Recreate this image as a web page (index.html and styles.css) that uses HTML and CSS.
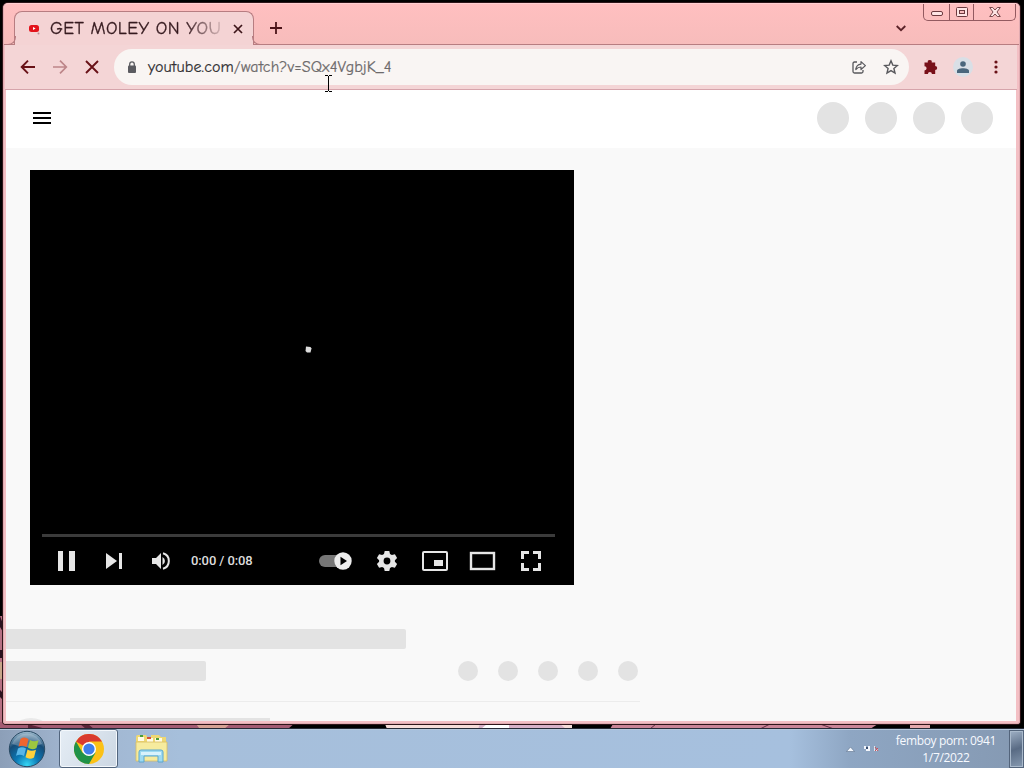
FILE: index.html
```html
<!DOCTYPE html>
<html lang="en">
<head>
    <meta charset="UTF-8">
    <title>GET MOLEY ON YOUTUBE</title>
    <link rel="stylesheet" href="styles.css">
</head>
<body>
    <div class="desktop">
        <svg class="wallpaper" width="1024" height="768">
            <rect width="1024" height="768" fill="#000"/>
            <path d="M0 616h3v112H0z" fill="#b77083"/>
            <path d="M0 616l3 8v8l-3-5zM0 650h3v8H0zM0 690l3 3v7l-3-3z" fill="#2c111f"/>
            <path d="M0 662h3v17H0z" fill="#c8a68a"/>
            <path d="M0 722h296l-8 7H0z" fill="#a35b72"/>
            <path d="M28 724l18 5H28zM80 724h8l6 5h-8z" fill="#5b2438"/>
            <path d="M196 724h34l-6 5h-24z" fill="#d5a294"/>
            <path d="M385 724h187v5H387z" fill="#f6ddd9"/>
            <path d="M480 724h80l6 5h-88z" fill="#d7b2c8"/>
            <path d="M487 724h22v5h-28z" fill="#fff"/>
            <path d="M613 724h265l-8 5H610z" fill="#c98496"/>
            <path d="M650 729l6-5M760 729l10-5M820 724l14 5" stroke="#622d42"/>
            <path d="M910 724h20v5h-20z" fill="#e3a9ad"/>
        </svg>

        <div class="window">
            <div class="tab-bar">
                <div class="tab">
                    <svg class="favicon" width="13" height="12" viewBox="0 0 13 12">
                        <rect x="0" y="2" width="10" height="7" rx="2.5" fill="#e3131b"/>
                        <path d="M4 4v3l2.600-1.500z" fill="#fff"/>
                        <circle cx="9.500" cy="10.500" r="1" fill="#b98d92"/>
                    </svg>
                    <span class="tab-title">GET MOLEY ON YOU</span>
                    <svg width="10" height="10" viewBox="0 0 10 10"><path d="M1 1l8 8M9 1L1 9" stroke="#3c1519" stroke-width="1.7"/></svg>
                </div>
                <svg class="new-tab" width="12" height="12" viewBox="0 0 12 12"><path d="M6 0v12M0 6h12" stroke="#4b1318" stroke-width="1.8"/></svg>
                <svg class="tab-search" width="10" height="7" viewBox="0 0 10 7"><path d="M.7 1L5 5.2 9.3 1" fill="none" stroke="#5a2228" stroke-width="1.8"/></svg>
                <div class="caption-buttons">
                    <span class="minimize"><svg width="12" height="5"><rect x=".5" y=".5" width="11" height="4" rx="1.5" fill="#ffe5e5" stroke="#6c3a3f"/></svg></span>
                    <span class="maximize"><svg width="12" height="10"><rect x=".5" y=".5" width="11" height="9" rx="1" fill="#ffe5e5" stroke="#6c3a3f"/><rect x="3.5" y="3.5" width="5" height="3" fill="#f9bcbc" stroke="#6c3a3f"/></svg></span>
                    <span class="close"><svg width="12" height="10" viewBox="0 0 12 10"><path d="M.7.5h3L6 3 8.300.5h3L8 5l3.300 4.500h-3L6 7 3.700 9.500h-3L4 5z" fill="#ffe5e5" stroke="#6c3a3f" stroke-width=".9"/></svg></span>
                </div>
            </div>

            <div class="toolbar">
                <svg width="16" height="16" viewBox="0 0 16 16"><path d="M15 8H2M8 1.700L1.700 8 8 14.300" fill="none" stroke="#681117" stroke-width="1.9"/></svg>
                <svg width="16" height="16" viewBox="0 0 16 16"><path d="M1 8h13M8 1.700L14.300 8 8 14.300" fill="none" stroke="#bd8589" stroke-width="1.7"/></svg>
                <svg width="16" height="16" viewBox="0 0 16 16"><path d="M2 2l12 12M14 2L2 14" stroke="#681117" stroke-width="1.9"/></svg>
                <div class="address">
                    <svg width="10" height="13" viewBox="0 0 10 13"><rect x="1" y="4.500" width="8" height="7.500" rx="1" fill="#5b5b60"/><path d="M2.700 5V3.200a2.300 2.300 0 0 1 4.600 0V5" fill="none" stroke="#5b5b60" stroke-width="1.300"/></svg>
                    <span class="url"><b>youtube.com</b>/watch?v=SQx4VgbjK_4</span>
                    <svg class="share" width="16" height="16" viewBox="0 0 16 16"><path d="M6 3H3.500Q2 3 2 4.500v8Q2 14 3.500 14h7q1.500 0 1.500-1.500V11" fill="none" stroke="#58585c" stroke-width="1.300"/><path d="M4.800 10.500C5.200 7 7 5.300 10 5.100V2.600l4.400 4L10 10.500V8Q7 8 4.800 10.500z" fill="none" stroke="#58585c" stroke-width="1.200" stroke-linejoin="round"/></svg>
                    <svg width="16" height="16" viewBox="0 0 16 16"><path d="M8 1.800l1.800 4.300 4.600.4-3.500 3 1.100 4.600-4-2.500-4 2.500 1.100-4.600-3.500-3 4.600-.4z" fill="none" stroke="#58585c" stroke-width="1.400"/></svg>
                </div>
                <svg class="extensions" width="16" height="16" viewBox="0 0 16 16"><path d="M1.500 3.500h3.300a2 2 0 1 1 3.900 0h3.500V7a2 2 0 1 1 0 4v4H8.900a2 2 0 0 0-4 0H1.500v-3.600a2.100 2.100 0 0 0 0-4.200z" fill="#781019"/></svg>
                <span class="profile"><svg width="12" height="12" viewBox="0 0 12 12"><circle cx="6" cy="3" r="2.800" fill="#4a667c"/><path d="M0 12v-2C0 8 3 7.200 6 7.200s6 .8 6 2.800v2z" fill="#4a667c"/></svg></span>
                <svg width="4" height="14" viewBox="0 0 4 14"><g fill="#681117"><circle cx="2" cy="2" r="1.600"/><circle cx="2" cy="7" r="1.600"/><circle cx="2" cy="12" r="1.600"/></g></svg>
            </div>

            <div class="page">
                <div class="masthead">
                    <svg width="18" height="12"><path d="M0 1h18M0 6h18M0 11h18" stroke="#000" stroke-width="2"/></svg>
                    <div class="masthead-icons">
                        <i></i><i></i><i></i><i></i>
                    </div>
                </div>

                <div class="player">
                    <div class="video">
                        <svg width="7" height="7" viewBox="0 0 7 7"><path d="M1 .500L5.500 1l1 1.500L5.500 6.500H2L.5 5z" fill="#ddd"/></svg>
                    </div>
                    <div class="progress"></div>
                    <div class="controls">
                        <svg width="48" height="48" viewBox="0 0 48 48"><path d="M16 14h5v20h-5zM27 14h6v20h-6z" fill="#e6e6e6"/></svg>
                        <svg width="46" height="48" viewBox="0 0 46 48"><path d="M16 16v16l11-8zM29 16h3v16h-3z" fill="#e6e6e6"/></svg>
                        <svg width="48" height="48" viewBox="0 0 48 48"><path d="M16 21v6h4l5 5V16l-5 5zM26.500 20v8a4.500 4.500 0 0 0 0-8z" fill="#e6e6e6"/><path d="M27 16.300a8 8 0 0 1 0 15.400" fill="none" stroke="#e6e6e6" stroke-width="2"/></svg>
                        <span class="time">0:00 / 0:08</span>
                        <svg width="48" height="48" viewBox="0 0 48 48"><rect x="4" y="18" width="28" height="12" rx="6" fill="#777"/><circle cx="28" cy="24" r="8.700" fill="#ededed"/><path d="M25.500 19.800v8.400l6.500-4.200z" fill="#000"/></svg>
                        <svg width="48" height="48" viewBox="0 0 48 48"><path d="M21.700 14h4.600l.7 3 1.900 1.100 3-.9 2.200 3.900-2.200 2.100v1.600l2.200 2.100-2.200 3.900-3-.9L27 31l-.7 3h-4.600l-.7-3-1.900-1.100-3 .9-2.200-3.900 2.200-2.100v-1.600l-2.200-2.100 2.200-3.900 3 .9L21 17zM24 20.600a3.400 3.400 0 1 0 0 6.800 3.400 3.400 0 0 0 0-6.800z" fill="#e6e6e6" fill-rule="evenodd"/></svg>
                        <svg width="48" height="48" viewBox="0 0 48 48"><rect x="12" y="15" width="24" height="18" rx="1" fill="none" stroke="#e6e6e6" stroke-width="2"/><path d="M23 23h9v6h-9z" fill="#e6e6e6"/></svg>
                        <svg width="48" height="48" viewBox="0 0 48 48"><rect x="12" y="16" width="23" height="16" fill="none" stroke="#e6e6e6" stroke-width="2.400"/></svg>
                        <svg width="48" height="48" viewBox="0 0 48 48"><path d="M15.500 22v-6.500H22M26 15.500h6.500V22M32.500 26v6.500H26M22 32.500h-6.500V26" fill="none" stroke="#e6e6e6" stroke-width="3"/></svg>
                    </div>
                </div>

                <div class="skeleton">
                    <div class="line-title"></div>
                    <div class="meta-row">
                        <div class="line-views"></div>
                        <div class="actions"><i></i><i></i><i></i><i></i><i></i></div>
                    </div>
                    <div class="owner">
                        <div class="avatar"></div>
                        <div class="line-owner"></div>
                    </div>
                </div>
            </div>
        </div>

        <div class="taskbar">
            <svg width="38" height="38" viewBox="0 0 38 38">
                <defs>
                    <radialGradient id="orb" cx=".5" cy=".95" r=".95">
                        <stop offset="0" stop-color="#35d6f4"/>
                        <stop offset=".35" stop-color="#0b78b5"/>
                        <stop offset=".7" stop-color="#164c77"/>
                        <stop offset="1" stop-color="#a4c0d2"/>
                    </radialGradient>
                </defs>
                <circle cx="19" cy="19" r="17.700" fill="url(#orb)" stroke="#294a63"/>
                <path d="M4 14a16 16 0 0 1 30 0q-14 6-30 0z" fill="#fff" opacity=".25"/>
                <path d="M12.500 9q4-3 8 .2L18.500 17q-4-2.500-8-.3z" fill="#ee6530"/>
                <path d="M22 10q4 2.500 8.500.2L28.500 18q-4 2.500-8.500-.2z" fill="#9dc83f"/>
                <path d="M10 18.500q4-2.500 8 0L16 26q-4-2.500-8-.2z" fill="#58b6e8"/>
                <path d="M19.500 19.500q4 2.500 8.500.2L26 27.500q-4 2.500-8.500-.2z" fill="#ffd13c"/>
            </svg>
            <div class="task-active">
                <svg width="30" height="30" viewBox="0 0 30 30">
                    <circle cx="15" cy="15" r="15" fill="#fbc116"/>
                    <path d="M15 15L2 7.500A15 15 0 0 1 28 7.500H15z" fill="#d93a2f"/>
                    <path d="M2 7.500A15 15 0 0 0 15 30l6.500-11.200L15 15l-6.500 3.700z" fill="#1f9249"/>
                    <circle cx="15" cy="15" r="7" fill="#fff"/>
                    <circle cx="15" cy="15" r="5.600" fill="#3f7eea"/>
                </svg>
            </div>
            <svg class="explorer" width="34" height="30" viewBox="0 0 34 30">
                <path d="M1 3q0-2 2-2h8l2 3h3V1h8l2 2h5v24H1z" fill="#eed873"/>
                <path d="M3 3h6v4H3zM12 4h6v4h-6zM20 4h7v4h-7z" fill="#fffbe5"/>
                <path d="M5 1h3v2H5zM21 4h3v2h-3z" fill="#4a9d3c"/>
                <path d="M12 3h4v2h-4z" fill="#d65036"/>
                <path d="M1 8h31v19H1z" fill="#f6eb9e" stroke="#d9bd62" stroke-width=".8"/>
                <path d="M4 28V18q0-2 2-2h20q2 0 2 2v10h-5v-6H9v6z" fill="#9edaf1" stroke="#5aa6cf"/>
                <path d="M6 18h20v3H6z" fill="#d8f2fc"/>
            </svg>
            <div class="tray">
                <svg width="9" height="6"><path d="M.5 5.500l4-4.500 4 4.500z" fill="#f5f9ff" stroke="#5d708c" stroke-width=".6"/></svg>
                <svg class="status" width="16" height="8" viewBox="0 0 16 8"><path d="M1 1h2v3H1zM5 1h2v5H3V4h2z" fill="#f3f6fc"/><path d="M3 2h2v2H3z" fill="#384e70"/><path d="M11 1h1v5h-1zM13 4h2v2h-2z" fill="#e5e9f0"/><path d="M12 2l3 4M15 3l-3 3" stroke="#c4505c"/></svg>
                <div class="clock">
                    <div>femboy porn: 0941</div>
                    <div>1/7/2022</div>
                </div>
            </div>
            <div class="show-desktop"></div>
        </div>

        <svg class="cursor" width="7" height="17" viewBox="0 0 7 17"><path d="M0 .5h3M4 .5h3M3.500 1v15M0 16.500h3M4 16.500h3" stroke="#000"/></svg>
    </div>
</body>
</html>
```

FILE: styles.css
```css
* {
    box-sizing: border-box;
}
body {
    margin: 0;
    font-family: "Open Sans", sans-serif;
}
svg {
    display: block;
    flex: none;
}
.desktop {
    position: relative;
    display: flex;
    flex-direction: column;
    width: 1024px;
    height: 768px;
    overflow: hidden;
    background: #000;
}
.wallpaper {
    position: absolute;
    inset: 0;
}
.window {
    position: relative;
    display: flex;
    flex-direction: column;
    width: 1017px;
    height: 721px;
    margin: 3px 0 5px 3px;
    padding: 0 4px 3px 3px;
    background: #f3bfc4;
    border-radius: 5px 5px 3px 3px;
    box-shadow: inset 0 0 0 1px #e0abb1, 0 0 0 1px #2e1519;
}

/* tab strip */
.tab-bar {
    display: flex;
    height: 42px;
    margin: 0 -3px 0 -2px;
    padding-left: 10px;
    border-radius: 5px 5px 0 0;
    background: linear-gradient(#ffbfc0, #f7bcbb);
    border-top: 1px solid #ffd0d2;
    border-bottom: 1px solid #b77d81;
}
.tab {
    position: relative;
    display: flex;
    align-items: center;
    width: 240px;
    height: 34px;
    margin-top: 7px;
    padding: 0 10px 0 14px;
    background: #f4d3d4;
    border: 1px solid #b77d81;
    border-bottom: none;
    border-radius: 8px 8px 0 0;
}
.tab::before,
.tab::after {
    content: "";
    position: absolute;
    bottom: 0;
    width: 8px;
    height: 8px;
    border-bottom: 1px solid #b77d81;
}
.tab::before {
    left: -8px;
    border-right: 1px solid #b77d81;
    border-bottom-right-radius: 8px;
}
.tab::after {
    right: -8px;
    border-left: 1px solid #b77d81;
    border-bottom-left-radius: 8px;
}
.favicon {
    margin-right: 8px;
}
.tab-title {
    width: 173px;
    margin-right: 10px;
    overflow: hidden;
    font: 18px "Comic Sans MS", "Comic Neue", "Noto Sans", sans-serif;
    letter-spacing: .35px;
    -webkit-text-stroke: .3px transparent;
    white-space: nowrap;
    color: transparent;
    background: linear-gradient(90deg, #35191e 78%, #35191e22 100%);
    background-clip: text;
    -webkit-background-clip: text;
}
.new-tab {
    margin: 18px 0 0 16px;
}
.tab-search {
    margin: 21px 17px 0 auto;
}
.caption-buttons {
    display: flex;
    width: 93px;
    height: 17px;
    margin-right: 3px;
    border: 1px solid #935a60;
    border-top: none;
    border-radius: 0 0 5px 5px;
}
.caption-buttons span {
    display: flex;
    align-items: center;
    justify-content: center;
}
.minimize {
    width: 25px;
    padding-top: 3px;
}
.maximize {
    width: 25px;
    border-left: 1px solid #935a60;
    border-right: 1px solid #935a60;
}
.close {
    flex: 1;
}

/* toolbar */
.toolbar {
    display: flex;
    align-items: center;
    gap: 16px;
    height: 45px;
    margin: 0 -1px 0 -1px;
    padding: 0 17px 0 15px;
    background: #f4d5d6;
    border-bottom: 1px solid #d6a4ab;
}
.address {
    display: flex;
    align-items: center;
    flex: none;
    width: 795px;
    height: 36px;
    margin-left: -2px;
    padding: 0 10px 0 13px;
    border-radius: 18px;
    background: #f9f5f3;
}
.url {
    margin-left: 11px;
    font: 16px "Comic Sans MS", "Comic Neue", "Noto Sans", sans-serif;
    letter-spacing: .1px;
    -webkit-text-stroke: .2px;
    color: #6d6a6b;
}
.url b {
    font-weight: normal;
    color: #323033;
}
.share {
    margin: 0 16px 0 auto;
}
.extensions {
    margin-left: -2px;
}
.profile {
    display: flex;
    align-items: center;
    justify-content: center;
    width: 20px;
    height: 20px;
    margin: 0 5px 0 -2px;
    border-radius: 50%;
    background: #d9dfe6;
}

/* page */
.page {
    flex: 1;
    min-height: 0;
    overflow: hidden;
    background: #f9f9f9;
}
.masthead {
    display: flex;
    align-items: center;
    justify-content: space-between;
    height: 58px;
    padding: 0 23px 2px 27px;
    background: #fff;
}
.masthead-icons {
    display: flex;
    gap: 16px;
}
.masthead-icons i {
    width: 32px;
    height: 32px;
    border-radius: 50%;
    background: #e3e3e3;
}
.player {
    display: flex;
    flex-direction: column;
    width: 544px;
    height: 415px;
    margin: 22px 0 0 24px;
    background: #000;
}
.video {
    display: flex;
    height: 364px;
    padding: 176px 0 0 275px;
}
.progress {
    width: 513px;
    height: 3px;
    margin-left: 12px;
    background: #3b3b3b;
}
.controls {
    display: flex;
    padding-left: 12px;
}
.time {
    width: 131px;
    padding-left: 7px;
    font: 500 13px/47px Roboto, sans-serif;
    letter-spacing: -.1px;
    color: #ddd;
}

/* loading placeholders */
.skeleton {
    width: 634px;
    margin-top: 44px;
}
.line-title {
    width: 400px;
    height: 20px;
    border-radius: 0 2px 2px 0;
    background: #e3e3e3;
}
.meta-row {
    display: flex;
    justify-content: space-between;
    height: 53px;
    padding: 12px 2px 0 0;
    border-bottom: 1px solid #ececec;
}
.line-views {
    width: 200px;
    height: 20px;
    border-radius: 0 2px 2px 0;
    background: #e3e3e3;
}
.actions {
    display: flex;
    gap: 20px;
}
.actions i {
    width: 20px;
    height: 20px;
    border-radius: 50%;
    background: #e3e3e3;
}
.owner {
    display: flex;
    padding: 16px 0 0 1px;
}
.avatar {
    width: 48px;
    height: 48px;
    border-radius: 50%;
    background: #e9e9e9;
}
.line-owner {
    width: 200px;
    height: 20px;
    margin-left: 15px;
    background: #e3e3e3;
}

/* taskbar */
.taskbar {
    position: relative;
    display: flex;
    align-items: center;
    height: 39px;
    padding-left: 8px;
    background: linear-gradient(90deg, #8c9fb8 0, #9fb3cd 60px, #a6bfdb 180px, #a6c0de 790px, #8ea6c3 850px, #8599b2 100%);
    box-shadow: inset 0 1px #b5c7db, 0 -1px #252b38;
}
.task-active {
    display: flex;
    align-items: center;
    justify-content: center;
    width: 59px;
    height: 39px;
    margin-left: 13px;
    border: 1px solid #52657d;
    border-radius: 3px;
    background: linear-gradient(120deg, #e5edf5, #ccd7e3);
    box-shadow: inset 0 0 0 1px #f4f8fc;
}
.explorer {
    margin: 1px 0 0 17px;
}
.tray {
    display: flex;
    align-items: center;
    margin-left: auto;
    margin-right: 13px;
}
.status {
    margin: 0 17px 0 8px;
}
.clock {
    font-size: 12px;
    line-height: 17px;
    letter-spacing: -.35px;
    text-align: center;
    white-space: nowrap;
    color: #f7faff;
}
.show-desktop {
    width: 15px;
    height: 38px;
    border: 1px solid #53647b;
    background: linear-gradient(160deg, #9fb0c5, #596b84 50%, #8699b0);
    box-shadow: inset 0 0 0 1px #a9b9cb;
}
.cursor {
    position: absolute;
    left: 325px;
    top: 75px;
}
```
